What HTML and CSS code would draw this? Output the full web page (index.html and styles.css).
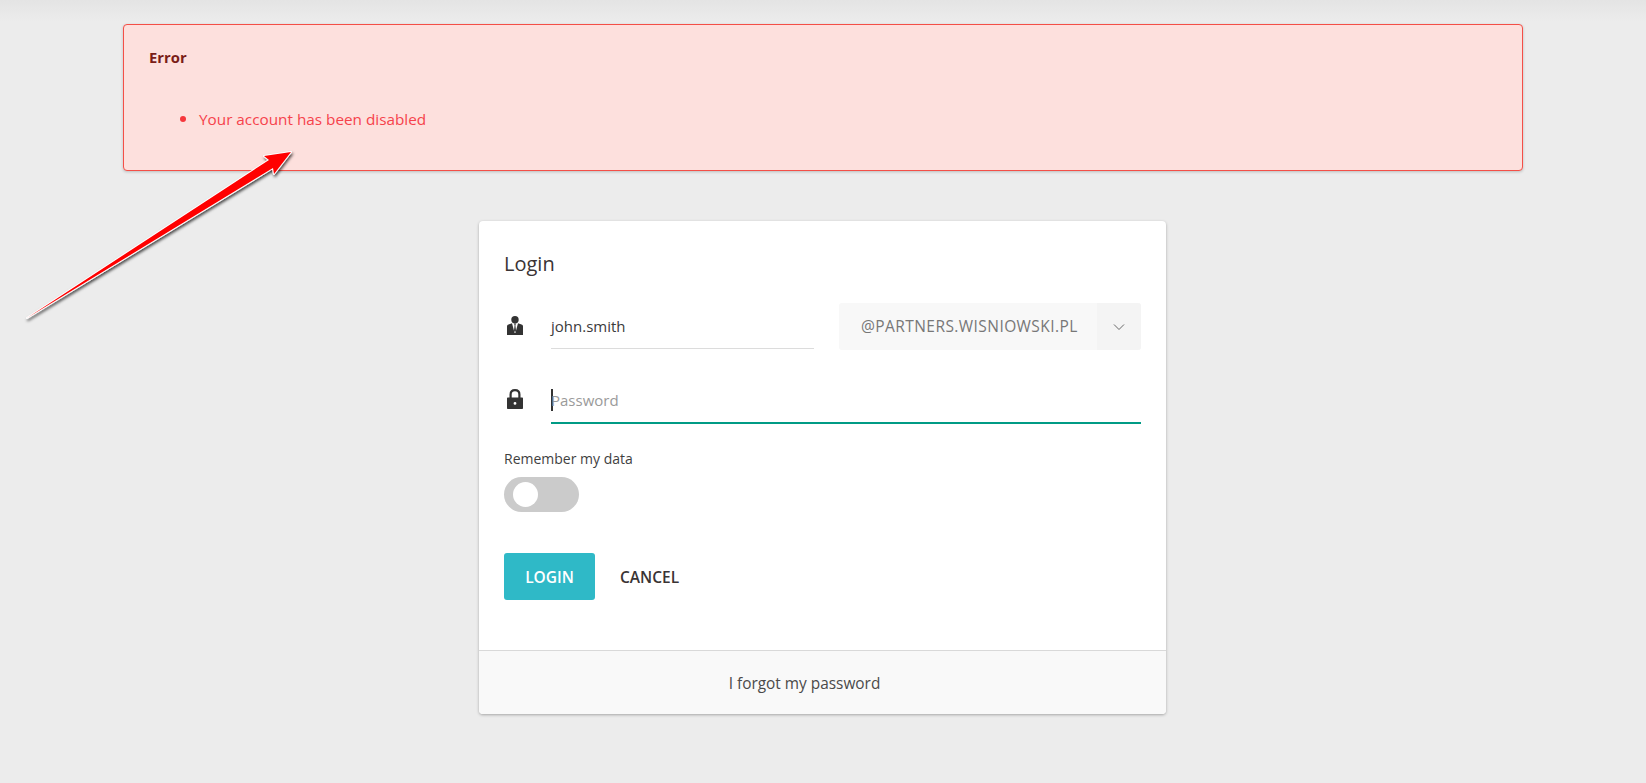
FILE: index.html
```html
<!DOCTYPE html>
<html lang="en">
<head>
<meta charset="utf-8">
<title>Login</title>
<link rel="stylesheet" href="styles.css">
</head>
<body>
<div class="page">
  <section class="alert">
    <h4 class="alert-title">Error</h4>
    <ul class="alert-list">
      <li>Your account has been disabled</li>
    </ul>
  </section>

  <section class="card">
    <div class="card-body">
      <h2 class="card-title">Login</h2>

      <div class="row row-user">
        <svg class="icon" viewBox="0 0 16 19" width="16" height="19">
          <circle cx="8" cy="3.7" r="3.7" fill="#333"/>
          <path fill="#333" d="M0 19V10.5C0 9.5.5 8.9 1.5 8.5L5 7.2 7.6 17H8.4L11 7.2 14.5 8.5C15.5 8.9 16 9.5 16 10.5V19Z"/>
          <path fill="#333" d="M7.1 7.4H8.9L8.4 9.4 9 14.5 8 16.5 7 14.5 7.6 9.4Z"/>
        </svg>
        <div class="field field-user"><span class="value">john.smith</span></div>
        <div class="domain">
          <span class="domain-name">@PARTNERS.WISNIOWSKI.PL</span>
          <span class="domain-toggle">
            <svg viewBox="0 0 12 8" width="12" height="8"><path d="M1 1.5 6 6.5 11 1.5" fill="none" stroke="#666" stroke-width="1"/></svg>
          </span>
        </div>
      </div>

      <div class="row row-pass">
        <svg class="icon" viewBox="0 0 16 20" width="16" height="20">
          <path fill="none" stroke="#333" stroke-width="2.2" d="M3.6 9V5.6C3.6 3 5.4 1.2 8 1.2S12.4 3 12.4 5.6V9"/>
          <path fill="#333" fill-rule="evenodd" d="M1 8.5H15C15.6 8.5 16 8.9 16 9.5V19C16 19.6 15.6 20 15 20H1C.4 20 0 19.6 0 19V9.5C0 8.9 .4 8.5 1 8.5ZM8 13A1.4 1.4 0 1 0 8 15.8 1.4 1.4 0 1 0 8 13Z"/>
        </svg>
        <div class="field field-pass"><span class="caret"></span><span class="placeholder">Password</span></div>
      </div>

      <div class="remember">
        <div class="remember-label">Remember my data</div>
        <div class="switch"><span class="knob"></span></div>
      </div>

      <div class="actions">
        <button class="btn btn-primary" type="button">LOGIN</button>
        <button class="btn btn-plain" type="button">CANCEL</button>
      </div>
    </div>
    <div class="card-footer">I forgot my password</div>
  </section>
</div>

<svg class="arrow" viewBox="0 0 1646 783" width="1646" height="783">
  <defs>
    <filter id="arrow-shadow" x="-10%" y="-10%" width="120%" height="120%">
      <feDropShadow dx="1" dy="2" stdDeviation="1.4" flood-color="#000" flood-opacity=".7"/>
    </filter>
  </defs>
  <polygon points="27,318 269,160 264,156 291,152 274,174 273,168" fill="#ff0000" stroke="#fff" stroke-width="2" stroke-linejoin="round" paint-order="stroke" filter="url(#arrow-shadow)"/>
</svg>
</body>
</html>
```
FILE: styles.css
```css
* { box-sizing: border-box; }
html, body { margin: 0; height: 100%; }
body {
  background: #ececec;
  font-family: "Open Sans", "Noto Sans", sans-serif;
  color: #3a3a3a;
  overflow: hidden;
  position: relative;
}
.page {
  height: 783px;
  padding-top: 24px;
  background: linear-gradient(#e4e4e4 0, #ececec 22px);
}
.alert {
  width: 1400px;
  height: 147px;
  margin: 0 auto;
  padding: 22px 25px;
  background: #fde0dd;
  border: 1px solid #f44f47;
  border-radius: 4px;
  box-shadow: 0 1px 3px rgba(0,0,0,.2);
}
.alert-title {
  margin: 0;
  font-size: 14.8px;
  line-height: 20px;
  font-weight: 700;
  color: #7a1d17;
}
.alert-list {
  margin: 42px 0 0;
  padding: 0 0 0 50px;
  font-size: 15.3px;
  line-height: 20px;
  color: #f6424b;
}
.alert-list li::marker { color: #f6363c; font-size: 17px; }
.card {
  width: 687px;
  height: 493px;
  margin: 50px 0 0 479px;
  display: flex;
  flex-direction: column;
  background: #fff;
  border-radius: 4px;
  box-shadow: 0 1px 3px rgba(0,0,0,.3);
}
.card-body {
  flex: 1;
  padding: 29px 25px 0;
}
.card-title {
  margin: 0;
  font-size: 20px;
  line-height: 28px;
  font-weight: 400;
  color: #3a3434;
}
.row { display: flex; align-items: flex-start; }
.row-user { margin-top: 25px; height: 47px; }
.row-pass { margin-top: 27px; height: 47px; }
.icon { flex: none; margin: 13px 0 0 3px; }
.row-pass .icon { margin-top: 12px; }
.field {
  height: 47px;
  margin-left: 28px;
  padding-top: 13px;
  font-size: 15px;
  line-height: 20px;
}
.field-user {
  width: 263px;
  border-bottom: 1px solid #dcdcdc;
  height: 46px;
}
.value { color: #3b3b3b; }
.field-pass {
  flex: 1;
  display: flex;
  align-items: flex-start;
  padding-top: 12px;
  border-bottom: 2px solid #009b85;
}
.caret {
  width: 2px;
  height: 22px;
  margin-right: -2px;
  background: #333;
  flex: none;
}
.placeholder { color: #9a9a9a; line-height: 22px; }
.domain {
  width: 302px;
  height: 47px;
  margin-left: 25px;
  display: flex;
  background: #f8f8f8;
  border-radius: 3px;
  overflow: hidden;
}
.domain-name {
  flex: 1;
  padding-left: 22px;
  font-size: 15.5px;
  letter-spacing: .43px;
  line-height: 46px;
  color: #777;
  white-space: nowrap;
}
.domain-toggle {
  width: 44px;
  display: flex;
  align-items: center;
  justify-content: center;
  background: #f4f4f4;
}
.remember { margin-top: 25px; }
.remember-label {
  font-size: 14px;
  line-height: 20px;
  color: #3f3f3f;
}
.switch {
  width: 75px;
  height: 35px;
  margin-top: 8px;
  padding: 5px 9px;
  background: #cbcbcb;
  border-radius: 18px;
}
.knob {
  display: block;
  width: 25px;
  height: 25px;
  background: #fff;
  border-radius: 50%;
}
.actions {
  display: flex;
  align-items: center;
  margin-top: 41px;
}
.btn {
  height: 47px;
  border: 0;
  border-radius: 3px;
  font-family: inherit;
  font-size: 15.5px;
  font-weight: 600;
  padding: 0;
}
.btn-primary {
  width: 91px;
  background: #2fb9c7;
  color: #fff;
}
.btn-plain {
  margin-left: 25px;
  background: none;
  color: #3a3434;
}
.card-footer {
  height: 64px;
  display: flex;
  align-items: center;
  justify-content: center;
  padding: 2px 36px 0 0;
  background: #f9f9f9;
  border-top: 1px solid #d9d9d9;
  border-radius: 0 0 4px 4px;
  font-size: 15.4px;
  color: #4a4a4a;
}
.arrow {
  position: absolute;
  left: 0;
  top: 0;
  pointer-events: none;
}
```
